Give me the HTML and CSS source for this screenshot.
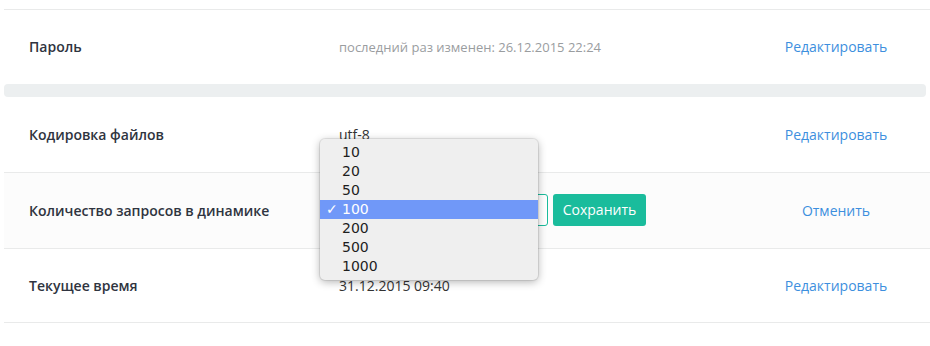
FILE: index.html
```html
<!doctype html>
<html lang="ru">
	<head>
		<meta charset="utf-8">
		<link rel="stylesheet" href="styles.css">
		<title>Настройки</title>
	</head>
	<body>
		<div class="settings">
			<div class="row first">
				<div class="label">Пароль</div>
				<div class="value muted">последний раз изменен: 26.12.2015 22:24</div>
				<div class="action"><a href="#">Редактировать</a></div>
			</div>

			<div class="divider"></div>

			<div class="row">
				<div class="label">Кодировка файлов</div>
				<div class="value">utf-8</div>
				<div class="action"><a href="#">Редактировать</a></div>
			</div>

			<div class="row editing">
				<div class="label">Количество запросов в динамике</div>
				<div class="value">
					<div class="edit-form">
						<div class="select-box">
							<ul class="dropdown">
								<li>10</li>
								<li>20</li>
								<li>50</li>
								<li class="selected">100</li>
								<li>200</li>
								<li>500</li>
								<li>1000</li>
							</ul>
						</div>
						<button class="btn-save">Сохранить</button>
					</div>
				</div>
				<div class="action"><a href="#">Отменить</a></div>
			</div>

			<div class="row last">
				<div class="label">Текущее время</div>
				<div class="value">31.12.2015 09:40</div>
				<div class="action"><a href="#">Редактировать</a></div>
			</div>
		</div>
	</body>
</html>
```

FILE: styles.css
```css
body {
	background: #fff;
	font: 14px/1.4 'Open Sans', sans-serif;
	color: #333;
	margin: 0;
	padding-top: 9px;
}

.settings {
	margin-left: 4px;
	width: 926px;
}

.row {
	display: flex;
	align-items: center;
	height: 75px;
	border-bottom: 1px solid #e9eaea;
}

.row.first {
	height: 74px;
	border-top: 1px solid #e9eaea;
	border-bottom: none;
}

.row.last {
	height: 73px;
}

.row.editing {
	background: #fcfcfc;
}

.divider {
	height: 13px;
	background: #eceff0;
	border-radius: 4px;
	margin-right: 4px;
}

.label {
	width: 335px;
	padding-left: 25px;
	box-sizing: border-box;
	font-weight: 600;
	color: #2f3440;
}

.value {
	flex: 1;
	color: #333;
}

.value.muted {
	font-size: 13px;
	color: #9a9d9f;
}

.action {
	width: 184px;
	padding-right: 4px;
	box-sizing: border-box;
	text-align: center;
}

.action a {
	color: #3d8fde;
	text-decoration: none;
}

.edit-form {
	display: flex;
	align-items: center;
	gap: 5px;
	margin-top: -2px;
}

.select-box {
	position: relative;
	width: 209px;
	height: 32px;
	box-sizing: border-box;
	border: 1px solid #1abc9c;
	border-radius: 3px;
	background: #fff;
}

.btn-save {
	height: 32px;
	width: 93px;
	border: none;
	border-radius: 3px;
	background: #1abc9c;
	color: #fff;
	font: 500 14px 'Open Sans', sans-serif;
}

.dropdown {
	position: absolute;
	left: -20px;
	top: -56px;
	width: 218px;
	margin: 0;
	padding: 4px 0;
	list-style: none;
	background: #efefef;
	border-radius: 5px;
	box-shadow: 0 2px 8px rgba(0, 0, 0, .3), 0 0 0 1px rgba(0, 0, 0, .08);
	font: 14px/19px 'DejaVu Sans', sans-serif;
	color: #1e1e1e;
}

.dropdown li {
	padding-left: 22px;
}

.dropdown li.selected {
	position: relative;
	background: #7098f8;
	color: #fff;
}

.dropdown li.selected:before {
	content: "✓";
	position: absolute;
	left: 6px;
	font-weight: bold;
}
```
